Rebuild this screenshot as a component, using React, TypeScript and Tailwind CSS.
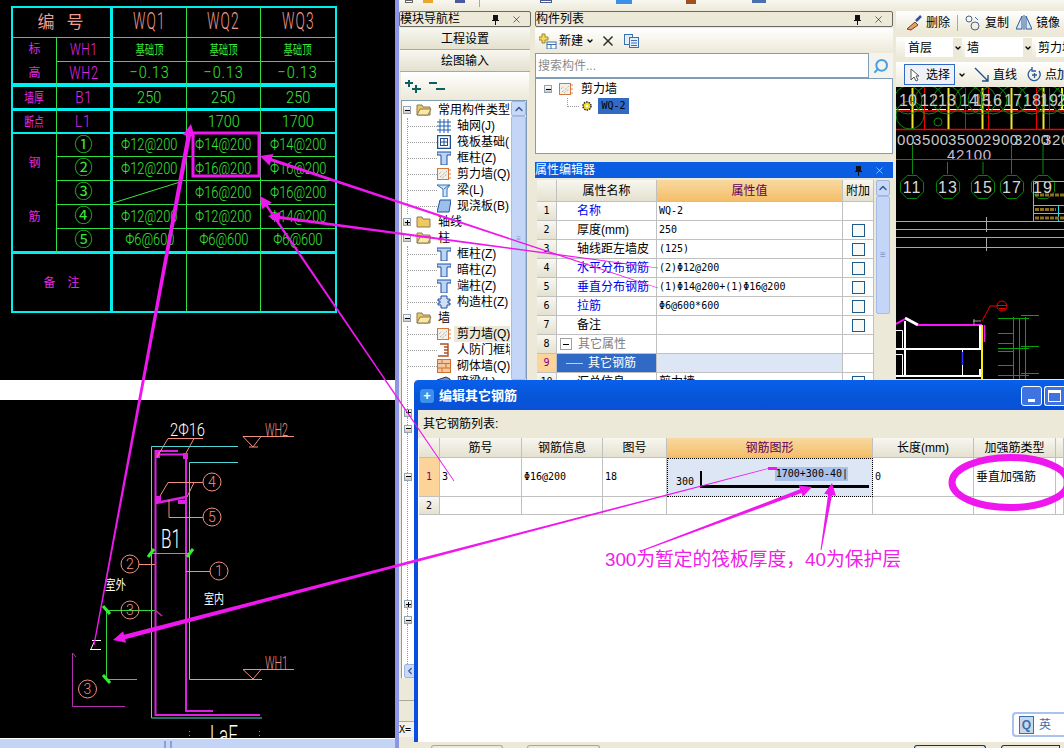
import { ChevronDown, ChevronLeft, ChevronUp, Search, X } from "lucide-react"
import type { ReactNode } from "react"

const mono = "font-['DejaVu_Sans_Mono','Noto_Sans_CJK_SC',monospace] text-[10px]"
const MAGENTA = "#ee18ee"

// ---------- small drawn icons ----------

function Pin() {
    return (
        <svg width="9" height="11" viewBox="0 0 9 11">
            <path d="M2 1h5v5h1v1H1V6h1zM4 7h1v4H4z" fill="#111" />
        </svg>
    )
}

function Folder({ open }: { open?: boolean }) {
    return (
        <svg width="16" height="12" viewBox="0 0 16 12" className="shrink-0">
            <path d="M1 1h5l1 2h7v8H1z" fill="#f0c860" stroke="#8a7a50" />
            {open && <path d="M1 11l3-6h11l-3 6z" fill="#fbe8a8" stroke="#8a7a50" />}
        </svg>
    )
}

function Box({ plus }: { plus?: boolean }) {
    return (
        <span className="relative flex h-[8px] w-[8px] shrink-0 items-center justify-center border border-[#8fa3b5] bg-gradient-to-b from-white to-[#cfcabc]">
            <span className="h-[1px] w-[5px] bg-black" />
            {plus && <span className="absolute h-[5px] w-[1px] bg-black" />}
        </span>
    )
}

function TreeIcon({ kind }: { kind: string }) {
    if (kind === "grid")
        return (
            <svg width="14" height="14" viewBox="0 0 14 14" stroke="#1f5fb0" className="shrink-0">
                <path d="M3 0v14M7 0v14M11 0v14M0 3h14M0 7h14M0 11h14" />
            </svg>
        )
    if (kind === "raft")
        return (
            <svg width="14" height="14" viewBox="0 0 14 14" fill="none" stroke="#1f4f90" className="shrink-0">
                <rect x="0.5" y="0.5" width="13" height="13" strokeWidth="1.5" />
                <rect x="3.5" y="3.5" width="7" height="7" />
                <path d="M3 7h8M7 3v8" />
            </svg>
        )
    if (kind === "col")
        return (
            <svg width="14" height="14" viewBox="0 0 14 14" className="shrink-0">
                <path d="M0 1h14v3H10v10H4V4H0z" fill="#bcd4f4" stroke="#1f4fa0" />
            </svg>
        )
    if (kind === "wall")
        return (
            <svg width="14" height="14" viewBox="0 0 14 14" className="shrink-0">
                <rect x="0.5" y="1.5" width="11" height="11" fill="#f4f0e8" stroke="#d07840" />
                <path d="M3 10l7-6M5 11l5-4M2 7l3-3" stroke="#a0a0a0" strokeDasharray="1 1" />
                <path d="M13 2v2M13 6v2M13 10v2" stroke="#e08040" />
            </svg>
        )
    if (kind === "beam")
        return (
            <svg width="14" height="14" viewBox="0 0 14 14" className="shrink-0">
                <path d="M0 2h13l-3 4v8H6V6z" fill="#d0e4f8" stroke="#3070b8" />
                <path d="M7 6l5-4" stroke="#3070b8" />
            </svg>
        )
    if (kind === "slab")
        return (
            <svg width="14" height="14" viewBox="0 0 14 14" className="shrink-0">
                <path d="M3 1h11l-2 12H0z" fill="#9cc0ec" stroke="#1f4fa0" />
            </svg>
        )
    if (kind === "scol")
        return (
            <svg width="14" height="14" viewBox="0 0 14 14" className="shrink-0">
                <path d="M4 1h6v3h3v2h-2v2h2v2h-3v3H4v-3H1V8h2V6H1V4h3z" fill="#cfe0f6" stroke="#1f4fa0" />
            </svg>
        )
    if (kind === "door")
        return (
            <svg width="14" height="14" viewBox="0 0 14 14" fill="none" stroke="#b05020" className="shrink-0">
                <path d="M3 1h8v12H1M7 4h4M7 7h4M7 10h4" strokeWidth="1.4" />
            </svg>
        )
    if (kind === "brick")
        return (
            <svg width="14" height="14" viewBox="0 0 14 14" fill="#f4c8a0" stroke="#d07030" className="shrink-0">
                <rect x="0.5" y="0.5" width="13" height="13" />
                <path d="M0 4.5h14M0 9h14M5 0v4.5M9 4.5V9M5 9v5" fill="none" />
            </svg>
        )
    return (
        <svg width="14" height="14" viewBox="0 0 14 14" className="shrink-0">
            <path d="M0 5l9-3 4 2v6H3z" fill="#7a90b8" stroke="#334" />
        </svg>
    )
}

function Check() {
    return <span className="block h-[13px] w-[13px] border border-[#1f5a8a] bg-[#f8f8f4]" />
}

// ---------- left side: the scanned CAD drawings ----------

function Cell({ className, children }: { className: string; children?: ReactNode }) {
    return <div className={`flex items-center justify-center overflow-hidden border-[#30e040] ${className}`}>{children}</div>
}

function Narrow({ className, children }: { className: string; children: ReactNode }) {
    return <span className={`inline-block whitespace-nowrap font-['Roboto','Noto_Sans_CJK_SC',sans-serif] font-light ${className}`}>{children}</span>
}

const rebarRows = [
    { tag: "①", v: ["Φ12@200", "Φ14@200", "Φ14@200"] },
    { tag: "②", v: ["Φ12@200", "Φ16@200", "Φ16@200"] },
    { tag: "③", v: ["", "Φ16@200", "Φ16@200"] },
    { tag: "④", v: ["Φ12@200", "Φ12@200", "Φ14@200"] },
    { tag: "⑤", v: ["Φ6@600", "Φ6@600", "Φ6@600"] },
]

function ScheduleTable() {
    const pink = "text-[#e428e4]"
    const green = "text-[#38e838]"
    const salmon = "text-[#f09a90]"
    return (
        <div className="ml-[11px] mt-[5px] grid h-[307px] w-[326px] grid-cols-[44px_56px_74px_74px_74px] grid-rows-[30px_24px_25px_24px_23px_23px_24px_24px_24px_25px_57px] border-2 border-[#00f0f0]">
            {/* header */}
            <Cell className={`col-span-2 border-b border-r-[3px] border-r-[#00f0f0] text-[17px] tracking-[12px] pl-[10px] ${salmon}`}>编号</Cell>
            {["WQ1", "WQ2", "WQ3"].map((t, i) => (
                <Cell key={t} className={`border-b ${i < 2 ? "border-r" : ""}`}>
                    <Narrow className={`text-[23px] tracking-[2px] scale-x-[.6] ${salmon}`}>{t}</Narrow>
                </Cell>
            ))}
            {/* elevations */}
            <Cell className={`row-span-2 flex-col gap-[6px] border-r border-b-[4px] border-b-[#00f0f0] text-[12px] ${pink}`}>
                <span>标</span>
                <span>高</span>
            </Cell>
            <Cell className="border-b border-r-[3px] border-r-[#00f0f0]">
                <Narrow className={`text-[17px] tracking-[1px] scale-x-[.7] ${pink}`}>WH1</Narrow>
            </Cell>
            {[0, 1, 2].map((i) => (
                <Cell key={i} className={`border-b ${i < 2 ? "border-r" : ""}`}>
                    <Narrow className={`text-[13px] font-normal scale-x-[.72] ${green}`}>基础顶</Narrow>
                </Cell>
            ))}
            <Cell className="border-b-[4px] border-b-[#00f0f0] border-r-[3px] border-r-[#00f0f0]">
                <Narrow className={`text-[18px] tracking-[1px] scale-x-[.7] ${pink}`}>WH2</Narrow>
            </Cell>
            {[0, 1, 2].map((i) => (
                <Cell key={i} className={`border-b-[4px] border-b-[#00f0f0] ${i < 2 ? "border-r" : ""}`}>
                    <Narrow className={`text-[17px] tracking-[1px] scale-x-[.85] ${green}`}>−0.13</Narrow>
                </Cell>
            ))}
            {/* wall thickness */}
            <Cell className="border-r border-b-[3px] border-b-[#00f0f0]">
                <Narrow className={`text-[13px] font-normal scale-x-[.75] ${pink}`}>墙厚</Narrow>
            </Cell>
            <Cell className="border-b-[3px] border-b-[#00f0f0] border-r-[3px] border-r-[#00f0f0]">
                <Narrow className={`text-[17px] tracking-[1px] scale-x-[.8] ${pink}`}>B1</Narrow>
            </Cell>
            {[0, 1, 2].map((i) => (
                <Cell key={i} className={`border-b-[3px] border-b-[#00f0f0] ${i < 2 ? "border-r" : ""}`}>
                    <Narrow className={`text-[17px] scale-x-[.85] ${green}`}>250</Narrow>
                </Cell>
            ))}
            {/* break point */}
            <Cell className="border-r border-b-2 border-b-[#00f0f0]">
                <Narrow className={`text-[13px] font-normal scale-x-[.75] ${pink}`}>断点</Narrow>
            </Cell>
            <Cell className="border-b-2 border-b-[#00f0f0] border-r-[3px] border-r-[#00f0f0]">
                <Narrow className={`text-[17px] tracking-[1px] scale-x-[.8] ${pink}`}>L1</Narrow>
            </Cell>
            {["", "1700", "1700"].map((t, i) => (
                <Cell key={i} className={`border-b-2 border-b-[#00f0f0] ${i < 2 ? "border-r" : ""}`}>
                    <Narrow className={`text-[17px] scale-x-[.85] ${green}`}>{t}</Narrow>
                </Cell>
            ))}
            {/* rebars */}
            <Cell className={`row-span-5 flex-col gap-[36px] border-r border-b-[3px] border-b-[#00f0f0] pb-[6px] text-[12px] ${pink}`}>
                <span>钢</span>
                <span>筋</span>
            </Cell>
            {rebarRows.map((r, ri) => (
                <div key={r.tag} className="contents">
                    <Cell className={`border-r-[3px] border-r-[#00f0f0] text-[18px] ${green} ${ri < 4 ? "border-b" : "border-b-[3px] border-b-[#00f0f0]"}`}>{r.tag}</Cell>
                    {r.v.map((t, i) => (
                        <Cell key={i} className={`${i < 2 ? "border-r" : ""} ${ri < 4 ? "border-b" : "border-b-[3px] border-b-[#00f0f0]"}`}>
                            {t && <Narrow className={`text-[16px] scale-x-[.8] ${green}`}>{t}</Narrow>}
                        </Cell>
                    ))}
                </div>
            ))}
            {/* remarks */}
            <Cell className={`col-span-2 border-r-[3px] border-r-[#00f0f0] text-[12px] tracking-[12px] pl-[12px] ${pink}`}>备注</Cell>
            <Cell className="border-r" />
            <Cell className="border-r" />
            <Cell className="" />
        </div>
    )
}

function SectionDrawing() {
    const salmon = "#f09080"
    const Tick = ({ x, y }: { x: number; y: number }) => <path d={`M${x - 3} ${y + 4}L${x + 3} ${y - 4}`} stroke="#30f030" strokeWidth="3" />
    const Bubble = ({ x, y, t }: { x: number; y: number; t: string }) => (
        <g>
            <circle cx={x} cy={y} r="9" fill="none" stroke={salmon} />
            <text x={x} y={y + 5} textAnchor="middle" fontSize="14" fill={salmon}>{t}</text>
        </g>
    )
    return (
        <svg width="395" height="338" viewBox="0 400 395 338" className="font-['Roboto','Noto_Sans_CJK_SC',sans-serif] font-light">
            <g fill="none" stroke="#50d8d8">
                <path d="M238 446.5H151.5V718H262" />
                <path d="M238 462.5H189.5V679.5H262" />
            </g>
            <g fill="none" stroke="#e020e0" strokeWidth="2">
                <path d="M178 451H155.5V715H260" />
                <path d="M157 454.500H186V711H213" />
                <path d="M156 503L186 497" strokeWidth="2.5" />
            </g>
            <g fill="#e020e0">
                <rect x="155" y="452" width="5" height="6" />
                <rect x="183" y="453" width="5" height="6" />
                <rect x="155" y="496" width="6" height="7" />
                <rect x="178" y="500" width="9" height="4" />
            </g>
            <g fill="none" stroke={salmon}>
                <path d="M157 457L168 438.5H203M186 453L194 438.5" />
                <path d="M243 436.5H294M243 436.5L253 447L261 436.5M249 447H258" />
                <path d="M203 482.5H168L160 496M194 482.5L187 497" />
                <path d="M203 517.5H169V500" />
                <path d="M139 564.5H155M186 571.5H210" />
                <path d="M243 669.5H294M243 669.5L253 679L261 669.5" />
            </g>
            <text x="265" y="436" fontSize="18" fill={salmon} textLength="23" lengthAdjust="spacingAndGlyphs">WH2</text>
            <text x="265" y="669" fontSize="18" fill={salmon} textLength="23" lengthAdjust="spacingAndGlyphs">WH1</text>
            <text x="170" y="436" fontSize="19" fill="#fff" textLength="35" lengthAdjust="spacingAndGlyphs">2Φ16</text>
            <text x="161" y="548" fontSize="26" fill="#fff" textLength="20" lengthAdjust="spacingAndGlyphs">B1</text>
            <text x="105" y="589" fontSize="13" fontWeight="400" fill="#fff" textLength="21" lengthAdjust="spacingAndGlyphs">室外</text>
            <text x="204" y="603" fontSize="13" fontWeight="400" fill="#fff" textLength="20" lengthAdjust="spacingAndGlyphs">室内</text>
            <text x="210" y="745" fontSize="28" fill="#fff" textLength="28" lengthAdjust="spacingAndGlyphs">LaE</text>
            <g fill="none" stroke="#30d840">
                <path d="M151 553.5H190" />
                <path d="M106 610.5H155M106.5 610V679M106 679.5H137" />
            </g>
            <Tick x={151} y={553} />
            <Tick x={190} y={553} />
            <path d="M103 606L110 614M103 675L110 683" stroke="#30f030" strokeWidth="3" />
            <path d="M155 610L162 616" stroke="#c030a0" strokeWidth="1.5" />
            <Bubble x={212} y={482} t="4" />
            <Bubble x={212} y={517} t="5" />
            <Bubble x={130} y={564} t="2" />
            <Bubble x={219} y={571} t="1" />
            <Bubble x={130} y={610} t="3" />
            <Bubble x={87.5} y={689} t="3" />
            <path d="M92 640.5H101M90 649.5H101M95 640L91 649" fill="none" stroke="#fff" />
            <path d="M76 657L72.5 653V706.5H125" fill="none" stroke="#b030b0" />
            <path d="M189.5 731V737M259.5 731V737" stroke="#30d840" strokeDasharray="1 3" />
        </svg>
    )
}

function LeftDrawings() {
    return (
        <div className="flex w-[395px] shrink-0 flex-col">
            <div className="h-[380px] bg-black pt-px">
                <ScheduleTable />
            </div>
            <div className="h-[20px] bg-white" />
            <div className="h-[338px] bg-black">
                <SectionDrawing />
            </div>
            <div className="flex h-[10px] justify-center border-t border-white bg-[#c4d4f6]">
                <span className="ml-[-60px] mt-[2px] h-[7px] w-[8px] border-x-2 border-[#8aa0d8]" />
            </div>
        </div>
    )
}

// ---------- navigation panel ----------

type Item = { icon: string; label: string; hit?: boolean }

const groups: { label: string; open: boolean; items: Item[] }[] = [
    {
        label: "常用构件类型",
        open: true,
        items: [
            { icon: "grid", label: "轴网(J)" },
            { icon: "raft", label: "筏板基础(" },
            { icon: "col", label: "框柱(Z)" },
            { icon: "wall", label: "剪力墙(Q)" },
            { icon: "beam", label: "梁(L)" },
            { icon: "slab", label: "现浇板(B)" },
        ],
    },
    { label: "轴线", open: false, items: [] },
    {
        label: "柱",
        open: true,
        items: [
            { icon: "col", label: "框柱(Z)" },
            { icon: "col", label: "暗柱(Z)" },
            { icon: "col", label: "端柱(Z)" },
            { icon: "scol", label: "构造柱(Z)" },
        ],
    },
    {
        label: "墙",
        open: true,
        items: [
            { icon: "wall", label: "剪力墙(Q)", hit: true },
            { icon: "door", label: "人防门框墙" },
            { icon: "brick", label: "砌体墙(Q)" },
            { icon: "dark", label: "暗梁(L)" },
        ],
    },
]

function PanelTitle({ label, blue }: { label: string; blue?: boolean }) {
    return (
        <div
            className={`flex h-[16px] shrink-0 items-center justify-between pr-[8px] text-[12px] leading-none ${
                blue ? "bg-[#0a5ce0] text-white" : "rounded-[2px] border border-[#6a6a60] bg-[#ece9d8] text-black"
            }`}
        >
            <span className="whitespace-nowrap">{label}</span>
            <span className="flex items-center gap-[11px]">
                <Pin />
                <X size={11} strokeWidth={1.2} />
            </span>
        </div>
    )
}

function NavPanel() {
    return (
        <div className="flex h-full w-[132px] shrink-0 flex-col">
            <PanelTitle label="模块导航栏" />
            <div className="mx-px mt-px flex h-[22px] items-center justify-center border-b border-[#aca899] bg-gradient-to-b from-[#f8f7f0] to-[#e4e1d0] text-[12px]">工程设置</div>
            <div className="mx-px flex h-[22px] items-center justify-center border-b border-[#aca899] bg-gradient-to-b from-[#f8f7f0] to-[#e4e1d0] text-[12px]">绘图输入</div>
            <div className="mx-[2px] flex h-[28px] items-center gap-[8px] bg-gradient-to-b from-white to-[#ece9d8] pl-[4px]">
                <svg width="16" height="13" viewBox="0 0 16 13" stroke="#0c6060" strokeWidth="2">
                    <path d="M0 3h8M4 0v7M7 9h9M11 5v8" />
                </svg>
                <svg width="16" height="9" viewBox="0 0 16 9" stroke="#0c6060" strokeWidth="2">
                    <path d="M0 1h8M7 7h9" />
                </svg>
            </div>
            <div className="ml-[2px] mr-[4px] flex min-h-0 flex-1 overflow-hidden border-x border-t border-[#7f9db9] bg-white">
                <div className="min-w-0 flex-1 overflow-hidden pt-[1px] text-[12px] leading-none">
                    {groups.map((g) => (
                        <div key={g.label}>
                            <div className="flex h-[16px] items-center gap-[5px] pl-[1px]">
                                <Box plus={!g.open} />
                                <Folder open={g.open} />
                                <span className="whitespace-nowrap pl-[1px]">{g.label}</span>
                            </div>
                            <div className="ml-[5px] border-l border-dotted border-[#999]">
                                {g.items.map((it) => (
                                    <div key={it.label + it.icon + g.label} className="flex h-[16px] items-center">
                                        <span className="w-[29px] shrink-0 border-t border-dotted border-[#999]" />
                                        <TreeIcon kind={it.icon} />
                                        <span className={`ml-[3px] whitespace-nowrap px-[3px] py-[2px] ${it.hit ? "bg-[#ece9d8]" : ""}`}>{it.label}</span>
                                    </div>
                                ))}
                            </div>
                        </div>
                    ))}
                </div>
                <div className="flex w-[16px] shrink-0 flex-col border-l border-white bg-[#e8eefc]">
                    <div className="flex h-[15px] items-center justify-center rounded-[2px] border border-[#9db5e0] bg-[#c8d8f8]">
                        <ChevronUp size={12} strokeWidth={3} className="text-[#3a5a90]" />
                    </div>
                    <div className="flex flex-1 items-center justify-center rounded-[2px] border border-[#a8bce8] bg-[#c4d6f8] pb-[20px] text-[8px] leading-[3px] text-[#7f96cc]">≡</div>
                </div>
            </div>
        </div>
    )
}

// tail of the navigation tree, left of the dialog
function NavTail() {
    return (
        <div className="flex w-[15px] shrink-0 flex-col">
            <div className="ml-[2px] flex h-[298px] flex-col border-l border-[#7f9db9] bg-white pl-[2px]">
                <div className="ml-[3px] h-[29px] border-l border-dotted border-[#999]" />
                <Box plus />
                <div className="ml-[3px] h-[8px] border-l border-dotted border-[#999]" />
                <Box />
                <div className="ml-[3px] h-[40px] border-l border-dotted border-[#999]" />
                <Box />
                <div className="ml-[3px] h-[120px] border-l border-dotted border-[#999]" />
                <Box plus />
                <div className="ml-[3px] h-[8px] border-l border-dotted border-[#999]" />
                <Box />
                <div className="ml-[3px] h-[40px] border-l border-dotted border-[#999]" />
                <div className="flex h-[14px] w-[12px] items-center justify-center rounded-l-[2px] border border-[#9db5e0] bg-[#c8d8f8]">
                    <ChevronLeft size={12} strokeWidth={3} className="text-[#3a5a90]" />
                </div>
            </div>
            <div className="mt-[2px] h-[21px] border-b border-[#aca899] bg-[#ece9d8]" />
            <div className="h-[21px] border-b border-[#aca899] bg-[#ece9d8]" />
            <div className="flex h-[15px] items-center overflow-hidden bg-[#f4f2e8] font-['DejaVu_Sans_Mono'] text-[10px] leading-none">X=</div>
            <div className="flex-1 bg-[#ece9d8]" />
        </div>
    )
}

// ---------- component list and property grid ----------

const props = [
    { n: "名称", v: "WQ-2", blue: true, box: false },
    { n: "厚度(mm)", v: "250", box: true },
    { n: "轴线距左墙皮", v: "(125)", box: true },
    { n: "水平分布钢筋", v: "(2)Φ12@200", blue: true, box: true },
    { n: "垂直分布钢筋", v: "(1)Φ14@200+(1)Φ16@200", blue: true, box: true },
    { n: "拉筋", v: "Φ6@600*600", blue: true, box: true },
    { n: "备注", v: "", box: true },
]

function RowNo({ n, hot }: { n: number; hot?: boolean }) {
    return (
        <div className={`flex items-center justify-center border-b border-r border-[#c0c0c0] ${mono} ${hot ? "bg-[#fcd398] text-[#800080]" : "bg-gradient-to-b from-[#f8f7f0] to-[#e4e1d0]"}`}>
            {n}
        </div>
    )
}

function ListPanel() {
    return (
        <div className="flex h-full w-[358px] shrink-0 flex-col text-[12px] leading-none">
            <PanelTitle label="构件列表" />
            <div className="mt-px flex h-[25px] shrink-0 items-center bg-gradient-to-b from-white to-[#ece9d8] pl-[4px]">
                <svg width="18" height="16" viewBox="0 0 18 16">
                    <path d="M3 1h3v3h3v3H6v3H3V7H0V4h3z" fill="#f4d860" stroke="#a08820" />
                    <rect x="8" y="9" width="9" height="7" fill="#fff" stroke="#3a70b0" />
                    <path d="M8 11.5h9M12 11v5" stroke="#3a70b0" />
                </svg>
                <span className="ml-[2px]">新建</span>
                <ChevronDown size={8} strokeWidth={4} className="ml-[3px]" />
                <X size={16} strokeWidth={2.5} className="ml-[6px] text-[#333]" />
                <svg width="15" height="14" viewBox="0 0 15 14" className="ml-[8px]" fill="#e4eefa" stroke="#3a70b0">
                    <rect x="0.5" y="0.5" width="8" height="10" />
                    <rect x="5.5" y="3.5" width="9" height="10" />
                    <path d="M7 6.5h6M7 9h6M7 11.5h6" />
                </svg>
            </div>
            <div className="flex h-[25px] shrink-0 items-stretch">
                <div className="flex flex-1 items-center border border-[#7f9db9] bg-white pl-[2px] text-[#8a8a8a]">搜索构件...</div>
                <div className="flex w-[24px] items-center justify-center bg-[#f4f4ee]">
                    <Search size={16} strokeWidth={3} className="-scale-x-100 text-[#4a9fe0]" />
                </div>
            </div>
            <div className="h-[76px] shrink-0 border border-[#7f9db9] bg-white pl-[8px] pt-[2px]">
                <div className="flex h-[16px] items-center gap-[7px]">
                    <Box />
                    <TreeIcon kind="wall" />
                    <span className="ml-[1px]">剪力墙</span>
                </div>
                <div className="ml-[23px] flex h-[18px] items-center">
                    <span className="mb-[8px] h-[9px] w-[12px] border-b border-l border-dotted border-[#999]" />
                    <svg width="12" height="12" viewBox="0 0 12 12" className="ml-[2px]">
                        <circle cx="6" cy="6" r="4" fill="#f0d820" stroke="#222" strokeWidth="1.5" strokeDasharray="1.5 1" />
                        <circle cx="6" cy="6" r="1.5" fill="#fff" />
                    </svg>
                    <span className={`ml-[5px] flex h-[16px] w-[31px] items-center justify-center bg-[#316ac5] text-black ${mono}`}>WQ-2</span>
                </div>
            </div>
            <div className="h-[8px] shrink-0" />
            <PanelTitle label="属性编辑器" blue />
            <div className="flex min-h-0 flex-1 overflow-hidden pl-[2px] pr-[3px] pt-[2px]">
                <div className="grid w-[337px] shrink-0 grid-cols-[20px_100px_186px_31px] grid-rows-[22px_repeat(10,19px)] content-start bg-white">
                    <div className="border-b border-r border-[#c0c0c0] bg-gradient-to-b from-[#f8f7f0] to-[#e4e1d0]" />
                    <div className="flex items-center justify-center border-b border-r border-[#c0c0c0] bg-gradient-to-b from-[#f8f7f0] to-[#e4e1d0]">属性名称</div>
                    <div className="flex items-center justify-center border-b border-r border-[#c0c0c0] bg-gradient-to-b from-[#f8d9a0] to-[#f4be68] text-[#600060]">属性值</div>
                    <div className="flex items-center justify-center border-b border-r border-[#c0c0c0] bg-gradient-to-b from-[#f8f7f0] to-[#e4e1d0]">附加</div>
                    {props.map((p, i) => (
                        <div key={p.n} className="contents">
                            <RowNo n={i + 1} />
                            <div className={`flex items-center whitespace-nowrap border-b border-r border-[#c0c0c0] pl-[20px] ${p.blue ? "text-[#0000ee]" : "text-black"}`}>{p.n}</div>
                            <div className={`flex items-center whitespace-nowrap border-b border-r border-[#c0c0c0] pl-[2px] ${mono}`}>{p.v}</div>
                            <div className="flex items-center justify-center border-b border-r border-[#c0c0c0]">{p.box && <Check />}</div>
                        </div>
                    ))}
                    <RowNo n={8} />
                    <div className="flex items-center gap-[6px] whitespace-nowrap border-b border-r border-[#c0c0c0] pl-[3px] text-[#808080]">
                        <span className="flex h-[12px] w-[12px] items-center justify-center border border-[#a0a0a0]">
                            <span className="h-px w-[6px] bg-black" />
                        </span>
                        其它属性
                    </div>
                    <div className="border-b border-r border-[#c0c0c0]" />
                    <div className="border-b border-r border-[#c0c0c0]" />
                    <RowNo n={9} hot />
                    <div className="flex items-center gap-[5px] border-b border-r border-[#c0c0c0] bg-[#316ac5] pl-[9px] text-white">
                        <span className="h-px w-[17px] bg-[#c0d0e8]" />
                        其它钢筋
                    </div>
                    <div className="border-b border-r border-[#c0c0c0] bg-[#dce6f4]" />
                    <div className="border-b border-r border-[#c0c0c0]" />
                    <RowNo n={10} />
                    <div className="flex items-center whitespace-nowrap border-b border-r border-[#c0c0c0] pl-[20px]">汇总信息</div>
                    <div className="flex items-center border-b border-r border-[#c0c0c0] pl-[2px]">剪力墙</div>
                    <div className="flex items-center justify-center border-b border-r border-[#c0c0c0]">
                        <Check />
                    </div>
                </div>
                <div className="ml-[2px] flex w-[15px] flex-col">
                    <div className="flex h-[16px] items-center justify-center rounded-[2px] border border-[#9db5e0] bg-[#c8d8f8]">
                        <ChevronUp size={12} strokeWidth={3} className="text-[#3a5a90]" />
                    </div>
                    <div className="flex h-[118px] items-center justify-center rounded-[2px] border border-[#a8bce8] bg-[#c4d6f8] text-[10px] text-[#7f96cc]">≡</div>
                </div>
            </div>
        </div>
    )
}

// ---------- right toolbars and CAD canvas ----------

function Octagon({ x, y, t }: { x: number; y: number; t: string }) {
    const r = 12.5
    const pts = Array.from({ length: 8 }, (_, i) => {
        const a = (Math.PI / 4) * i + Math.PI / 8
        return `${x + r * Math.cos(a)},${y + r * Math.sin(a)}`
    }).join(" ")
    return (
        <g>
            <polygon points={pts} fill="none" stroke="#0a8a0a" />
            <text x={x} y={y + 6} textAnchor="middle" fontSize="16" fill="#d8d8d8" letterSpacing="1">{t}</text>
        </g>
    )
}

function CadCanvas() {
    const top = [
        [908, "10"], [929, "12"], [947, "13"], [969, "14"], [982, "15"], [993, "16"], [1013, "17"], [1032, "18"], [1049, "19"], [1066, "20"],
    ] as [number, string][]
    const dims = [[897, "00"], [913, "3500"], [948, "3500"], [983, "2900"], [1014, "3200"], [1043, "320"]] as [number, string][]
    return (
        <svg width="168" height="292" viewBox="896 88 168 292" className="block bg-black font-['Liberation_Sans']">
            {/* plan strip */}
            <path d="M896 130.5H1064" stroke="#f00000" strokeWidth="1.5" />
            <path d="M896 112H1064" stroke="#f00000" strokeWidth="1.5" />
            <path d="M896 110.5H1064" stroke="#fff" strokeDasharray="14 4" />
            <path d="M924.5 89V130M965.5 89V130M988.5 89V130M1036.5 89V130M1049.5 89V130" stroke="#f00000" />
            <path d="M912.5 89V130M948.5 89V130M982.5 89V130M1011.5 89V130M1043.5 89V130M1062 89V110" stroke="#f0e820" strokeWidth="2" />
            {top.map(([x]) => (
                <circle key={x} cx={x} cy={101} r="14" fill="none" stroke="#0a8a0a" />
            ))}
            <circle cx="938" cy="123" r="4" fill="none" stroke="#0a8a0a" />
            <circle cx="910" cy="116" r="14" fill="none" stroke="#0a8a0a" />
            {top.map(([x, t]) => (
                <text key={t} x={x} y={107} textAnchor="middle" fontSize="16" fill="#c8c8c8">{t}</text>
            ))}
            {dims.map(([x, t]) => (
                <text key={x} x={x} y={146} fontSize="15" fill="#c8c8c8" letterSpacing=".6">{t}</text>
            ))}
            <text x="947" y="161" fontSize="15" fill="#cdb8cd" letterSpacing=".6">42100</text>
            <path d="M896 160.5H1064" stroke="#0a8a0a" />
            <path d="M912.5 146V175M947.5 163V175M983 163V175M1011.5 146V175M1043 146V175" stroke="#0a8a0a" />
            <Octagon x={912} y={188} t="11" />
            <Octagon x={948} y={188} t="13" />
            <Octagon x={983} y={188} t="15" />
            <Octagon x={1012} y={188} t="17" />
            <Octagon x={1043} y={188} t="19" />
            {/* small detail table */}
            <path d="M1033.5 182.5H1064M1033.5 182.5V222M1033.5 206.5H1064M1033.5 214.5H1064M1058.5 206V222" fill="none" stroke="#20e0f0" />
            <path d="M1035 196H1064M1035 210.5H1056M1035 219H1064" stroke="#8a7020" strokeWidth="3" strokeDasharray="4 1" />
            {/* section lines */}
            <path d="M896 222.5H1064M896 230.5H1064M896 238.5H1064M896 248.5H1064M986.5 218V233M986.5 238V252" stroke="#a8a8a8" />
            {/* elevation */}
            <path d="M905 319L918 326" stroke="#fff" strokeWidth="3" />
            <path d="M896 325L905 320" stroke="#ff10ff" strokeWidth="2" />
            <path d="M918 326H982" stroke="#ff10ff" strokeWidth="2" />
            <path d="M984.5 326V343" stroke="#ff10ff" strokeWidth="1.5" />
            <path d="M905 322V378M896 350H983M896 377H983M980 326V350M980 370V377" stroke="#fff" strokeWidth="2" fill="none" />
            <path d="M896 331.5H902.5V350M896 355.5H902.5V377M962.5 350V378" stroke="#fff" fill="none" />
            <path d="M962.5 353V366" stroke="#3030ff" strokeWidth="1.5" />
            <path d="M982 326V380" stroke="#f8f000" strokeWidth="2" />
            <path d="M973 322H981M974 320V326" stroke="#a0a0a0" />
            <circle cx="1002" cy="307" r="5" fill="none" stroke="#f00000" />
            <path d="M997 306.5H1007M999 309.5H1005M997 307H990L987 313L982 322" fill="none" stroke="#f00000" />
            <path
                d="M1013.5 318V380M1019.5 320V380M1025.5 318V380M998 319.5H1029M998 334.5H1013M998 344.5H1013M998 349.5H1029M998 352.5H1013M998 366.5H1013M998 376.5H1029M1021 316.5H1039M1021 347.5H1039M1021 374.5H1039"
                stroke="#0aa00a"
                fill="none"
            />
        </svg>
    )
}

function Sep() {
    return <span className="mx-[3px] h-[16px] w-px bg-[#aca899]" />
}

function RightColumn() {
    return (
        <div className="flex h-full w-[168px] shrink-0 flex-col text-[12px] leading-none">
            <div className="flex h-[21px] shrink-0 items-center gap-[4px] whitespace-nowrap bg-gradient-to-b from-white to-[#ece9d8] pl-[10px] pt-[2px]">
                <svg width="16" height="16" viewBox="0 0 16 16">
                    <path d="M1 14L9 7l3 3-7 5z" fill="#e8a060" stroke="#704020" />
                    <path d="M10 6l5-5" stroke="#3050a0" strokeWidth="2.5" />
                </svg>
                <span>删除</span>
                <Sep />
                <svg width="16" height="16" viewBox="0 0 16 16" fill="none" stroke="#506080">
                    <circle cx="4" cy="4" r="3" />
                    <circle cx="10" cy="11" r="4" />
                    <path d="M10 2l3 3" stroke="#3070c0" />
                </svg>
                <span>复制</span>
                <svg width="16" height="15" viewBox="0 0 16 15" fill="#dce8f8" stroke="#2a5a9a" className="ml-[3px]">
                    <path d="M0 14L6 1v13zM16 14L10 1v13z" />
                    <path d="M8 0v15" />
                </svg>
                <span>镜像</span>
            </div>
            <div className="mt-[5px] flex h-[21px] shrink-0 items-center bg-gradient-to-b from-white to-[#ece9d8] pl-[9px]">
                <span className="flex h-[19px] w-[48px] items-center bg-white pl-[3px]">首层</span>
                <span className="flex h-[19px] w-[9px] items-center justify-center bg-[#ece9d8]"><ChevronDown size={8} strokeWidth={4} /></span>
                <span className="ml-[3px] flex h-[19px] w-[58px] items-center bg-white pl-[2px]">墙</span>
                <span className="flex h-[19px] w-[9px] items-center justify-center bg-[#ece9d8]"><ChevronDown size={8} strokeWidth={4} /></span>
                <span className="ml-[4px] flex h-[19px] flex-1 items-center overflow-hidden whitespace-nowrap bg-white pl-[2px]">剪力墙</span>
            </div>
            <div className="mt-[4px] flex h-[25px] shrink-0 items-center overflow-hidden whitespace-nowrap bg-gradient-to-b from-white to-[#ece9d8] pl-[8px]">
                <span className="flex h-[21px] w-[51px] shrink-0 items-center gap-[6px] border border-[#316ac5] bg-[#eef2f8] pl-[5px]">
                    <svg width="10" height="14" viewBox="0 0 10 14">
                        <path d="M1 1v11l3-3 2 4 2-1-2-4h3z" fill="#fff" stroke="#555" />
                    </svg>
                    选择
                </span>
                <ChevronDown size={8} strokeWidth={4} className="ml-[3px] shrink-0" />
                <Sep />
                <svg width="15" height="15" viewBox="0 0 15 15" className="ml-[2px] shrink-0" fill="none" stroke="#1f4f90" strokeWidth="1.4">
                    <path d="M1 1L14 14M14 8V14H8" />
                </svg>
                <span className="ml-[4px]">直线</span>
                <svg width="15" height="15" viewBox="0 0 15 15" className="ml-[10px] shrink-0" fill="none" stroke="#2a5a9a" strokeWidth="1.3">
                    <path d="M12 4a6 6 0 1 1-7-2M5 0v4h4M5 8h5M7.500 6v5" />
                </svg>
                <span className="ml-[3px]">点加</span>
            </div>
            <CadCanvas />
        </div>
    )
}

// ---------- dialog ----------

function Dialog() {
    const head = "flex items-center justify-center border-b border-r border-[#c0c0c0] bg-gradient-to-b from-[#f8f7f0] to-[#e4e1d0]"
    const cell = "flex items-center border-b border-r border-[#c0c0c0] pl-[2px] whitespace-nowrap"
    return (
        <div className="flex min-w-0 flex-1 flex-col rounded-tl-[5px] border-l-4 border-[#0a4ee0] bg-white">
            <div className="-ml-[4px] flex h-[30px] shrink-0 items-center rounded-tl-[5px] bg-gradient-to-b from-[#0a60ec] via-[#0656d8] to-[#0a50d8] pl-[6px] pt-[1px]">
                <span className="flex h-[14px] w-[14px] items-center justify-center rounded-[3px] bg-[#3a90ea] text-[13px] font-bold leading-none text-white">+</span>
                <span className="ml-[5px] text-[13px] font-bold text-white">编辑其它钢筋</span>
                <span className="ml-auto flex items-center gap-[2px]">
                    <span className="flex h-[20px] w-[21px] items-end justify-center rounded-[3px] border border-white bg-[#3f74e0] pb-[3px]">
                        <span className="h-[3px] w-[7px] bg-white" />
                    </span>
                    <span className="flex h-[20px] w-[20px] items-center justify-center rounded-l-[3px] border border-r-0 border-white bg-[#3f74e0]">
                        <span className="h-[12px] w-[13px] border border-t-[3px] border-white" />
                    </span>
                </span>
            </div>
            <div className="flex h-[28px] shrink-0 items-center bg-[#ece9d8] pl-[5px] text-[12px]">其它钢筋列表:</div>
            <div className="grid h-[77px] shrink-0 grid-cols-[21px_82px_81px_64px_206px_101px_82px_1fr] grid-rows-[20px_39px_18px] pl-px text-[12px] leading-none">
                <div className={head} />
                <div className={head}>筋号</div>
                <div className={head}>钢筋信息</div>
                <div className={head}>图号</div>
                <div className="flex items-center justify-center border-b border-r border-[#c0c0c0] bg-gradient-to-b from-[#f8d9a0] to-[#f4be68] text-[#600060]">钢筋图形</div>
                <div className={head}>长度(mm)</div>
                <div className={head}>加强筋类型</div>
                <div className={head} />

                <RowNo n={1} hot />
                <div className={`${cell} ${mono}`}>3</div>
                <div className={`${cell} ${mono}`}>Φ16@200</div>
                <div className={`${cell} ${mono}`}>18</div>
                <div className={`flex items-end border border-dotted border-black bg-[#dce6f4] pb-[8px] pl-[8px] pr-[3px] ${mono}`}>
                    <span className="mr-[6px] pb-[1px]">300</span>
                    <div className="flex h-[17px] flex-1 justify-end border-b-[3px] border-l-2 border-black pr-[21px]">
                        <span className="-mt-[4px] h-[14px] bg-[#a8c0ec] pl-px leading-[14px]">1700+300-40|</span>
                    </div>
                </div>
                <div className={`${cell} ${mono}`}>0</div>
                <div className={cell}>垂直加强筋</div>
                <div className={cell} />

                <RowNo n={2} />
                {[0, 1, 2, 3, 4, 5, 6].map((i) => (
                    <div key={i} className="border-b border-r border-[#c0c0c0]" />
                ))}
            </div>
            <div className="flex flex-1 items-start bg-white pl-[187px] pt-[36px]">
                <span className="whitespace-nowrap text-[18.75px] leading-none text-[#f020e8]">300为暂定的筏板厚度，40为保护层</span>
            </div>
            <div className="flex shrink-0 justify-end">
                <div className="mb-[5px] flex h-[25px] w-[52px] items-center gap-[5px] rounded-l-[4px] border-2 border-r-0 border-[#a8c4ec] bg-white pl-[5px] text-[12px] text-[#3a70a8]">
                    <span className="flex h-[18px] w-[15px] items-center justify-center border border-[#3a70a8] bg-[#c8d8ec] font-bold">Q</span>
                    英
                </div>
            </div>
            <div className="-ml-[4px] flex h-[6px] shrink-0 items-end bg-[#ece9d8] pl-[17px]">
                <span className="h-[3px] w-[72px] rounded-t-[3px] border border-b-0 border-[#aca899]" />
                <span className="ml-[24px] h-[3px] w-[73px] rounded-t-[3px] border border-b-0 border-[#aca899]" />
                <span className="ml-[314px] h-[3px] w-[72px] rounded-t-[3px] border border-b-0 border-[#003c74]" />
                <span className="ml-[15px] h-[3px] w-[59px] rounded-tl-[3px] border border-b-0 border-[#003c74]" />
            </div>
        </div>
    )
}

// ---------- hand drawn magenta notes on top of everything ----------

function Arrow({ from, tip, w1, w2, head = 12 }: { from: [number, number]; tip: [number, number]; w1: number; w2: number; head?: number }) {
    const dx = tip[0] - from[0]
    const dy = tip[1] - from[1]
    const len = Math.hypot(dx, dy)
    const ux = dx / len
    const uy = dy / len
    const nx = -uy
    const ny = ux
    const bx = tip[0] - ux * head
    const by = tip[1] - uy * head
    const pts = [
        [from[0] + (nx * w1) / 2, from[1] + (ny * w1) / 2],
        [bx + (nx * w2) / 2, by + (ny * w2) / 2],
        [bx + nx * head * 0.5, by + ny * head * 0.5],
        tip,
        [bx - nx * head * 0.5, by - ny * head * 0.5],
        [bx - (nx * w2) / 2, by - (ny * w2) / 2],
        [from[0] - (nx * w1) / 2, from[1] - (ny * w1) / 2],
    ]
    return <polygon points={pts.map((p) => p.join(",")).join(" ")} fill={MAGENTA} />
}

function Notes() {
    return (
        <svg width="1064" height="748" viewBox="0 0 1064 748" className="pointer-events-none absolute left-0 top-0">
            <path d="M113 203L180 182" stroke="#38e838" />
            <rect x="193" y="133" width="66" height="43" fill="none" stroke={MAGENTA} strokeWidth="3" />
            <Arrow from={[658, 288]} tip={[260, 156]} w1={0.7} w2={3} />
            <Arrow from={[658, 268]} tip={[268, 216]} w1={0.7} w2={3} />
            <Arrow from={[94, 645]} tip={[191, 124]} w1={1.3} w2={4.5} />
            <Arrow from={[454, 481]} tip={[260, 196]} w1={0.8} w2={2.5} />
            <Arrow from={[770, 468]} tip={[113, 640]} w1={0.7} w2={4.5} />
            <Arrow from={[641, 551]} tip={[812, 487]} w1={1} w2={4} />
            <Arrow from={[821, 550]} tip={[832, 483]} w1={1} w2={4} />
            <rect x="768" y="467" width="9" height="3" fill={MAGENTA} />
            <ellipse cx="1010" cy="482.500" rx="58" ry="25" fill="none" stroke={MAGENTA} strokeWidth="7" />
        </svg>
    )
}

export default function App() {
    return (
        <div className="relative flex h-[748px] w-[1064px] overflow-hidden bg-black font-['Liberation_Sans','Noto_Sans_CJK_SC',sans-serif] text-black">
            <LeftDrawings />
            <div className="w-[4px] shrink-0 bg-[#8c96e4]" />
            <div className="flex min-w-0 flex-1 flex-col bg-[#ece9d8]">
                <div className="flex h-[11px] shrink-0 items-start gap-[10px] overflow-hidden bg-gradient-to-b from-[#f8f7f0] to-[#ece9d8] pl-[6px]">
                    <span className="h-[3px] w-[8px] border border-[#666] bg-white" />
                    <span className="h-[3px] w-[10px] bg-[#e8a830]" />
                    <span className="ml-[12px] h-[3px] w-[10px] bg-[#4a5aa0]" />
                    <span className="ml-[4px] h-[7px] w-px bg-[#aca899]" />
                    <span className="ml-[50px] h-[3px] w-[12px] border border-[#4a5a90] bg-white" />
                    <span className="ml-[54px] h-[4px] w-[16px] bg-[#3a90ea]" />
                    <span className="ml-[44px] h-[4px] w-[10px] bg-[#a05020]" />
                    <span className="ml-[46px] h-[3px] w-[14px] bg-[#4a70b0]" />
                </div>
                <div className="flex h-[369px] shrink-0 overflow-hidden">
                    <NavPanel />
                    <div className="w-[4px] shrink-0" />
                    <ListPanel />
                    <div className="w-[3px] shrink-0" />
                    <RightColumn />
                </div>
                <div className="flex min-h-0 flex-1">
                    <NavTail />
                    <Dialog />
                </div>
            </div>
            <Notes />
        </div>
    )
}
